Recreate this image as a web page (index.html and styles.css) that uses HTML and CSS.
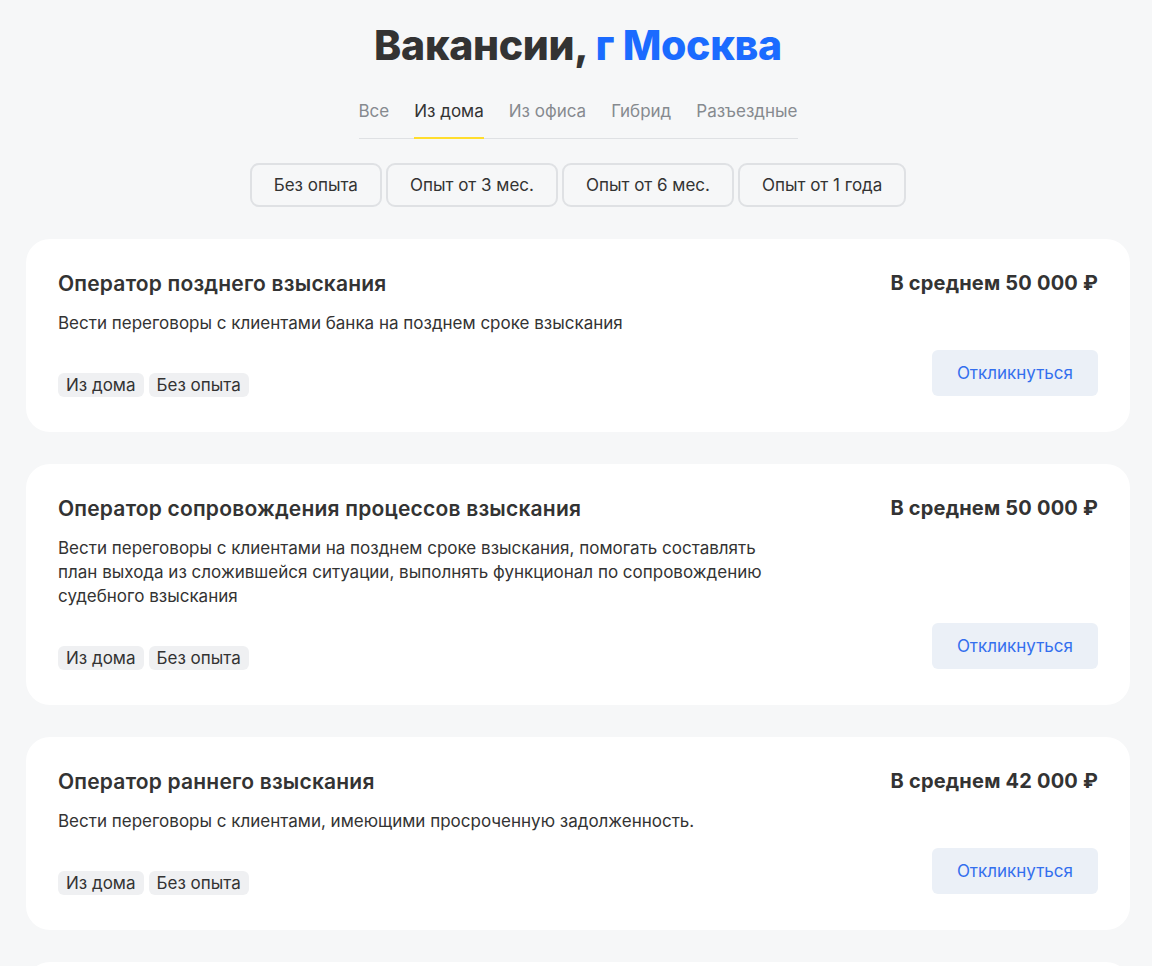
FILE: index.html
```html
<!DOCTYPE html>
<html lang="ru">
<head>
<meta charset="utf-8">
<title>Вакансии, г Москва</title>
<link rel="stylesheet" href="styles.css">
</head>
<body>
<main class="page">
  <h1 class="heading">Вакансии, <span class="city">г Москва</span></h1>
  <nav class="tabs">
    <a class="tab">Все</a>
    <a class="tab tab-active">Из дома</a>
    <a class="tab">Из офиса</a>
    <a class="tab">Гибрид</a>
    <a class="tab">Разъездные</a>
  </nav>
  <div class="chips">
    <button class="chip">Без опыта</button>
    <button class="chip">Опыт от 3 мес.</button>
    <button class="chip">Опыт от 6 мес.</button>
    <button class="chip">Опыт от 1 года</button>
  </div>
  <section class="list">
    <article class="card">
      <div class="card-main">
        <h2 class="card-title">Оператор позднего взыскания</h2>
        <p class="card-desc">Вести переговоры с клиентами банка на позднем сроке взыскания</p>
        <div class="tags"><span class="tag">Из дома</span><span class="tag">Без опыта</span></div>
      </div>
      <div class="card-side">
        <div class="salary">В среднем 50&nbsp;000 ₽</div>
        <button class="apply">Откликнуться</button>
      </div>
    </article>
    <article class="card">
      <div class="card-main">
        <h2 class="card-title">Оператор сопровождения процессов взыскания</h2>
        <p class="card-desc">Вести переговоры с клиентами на позднем сроке взыскания, помогать составлять план выхода из сложившейся ситуации, выполнять функционал по сопровождению судебного взыскания</p>
        <div class="tags"><span class="tag">Из дома</span><span class="tag">Без опыта</span></div>
      </div>
      <div class="card-side">
        <div class="salary">В среднем 50&nbsp;000 ₽</div>
        <button class="apply">Откликнуться</button>
      </div>
    </article>
    <article class="card">
      <div class="card-main">
        <h2 class="card-title">Оператор раннего взыскания</h2>
        <p class="card-desc">Вести переговоры с клиентами, имеющими просроченную задолженность.</p>
        <div class="tags"><span class="tag">Из дома</span><span class="tag">Без опыта</span></div>
      </div>
      <div class="card-side">
        <div class="salary">В среднем 42&nbsp;000 ₽</div>
        <button class="apply">Откликнуться</button>
      </div>
    </article>
    <article class="card">
      <div class="card-main">
        <h2 class="card-title">Оператор входящей линии</h2>
        <p class="card-desc">Консультировать клиентов банка по продуктам и услугам</p>
        <div class="tags"><span class="tag">Из дома</span><span class="tag">Без опыта</span></div>
      </div>
      <div class="card-side">
        <div class="salary">В среднем 45&nbsp;000 ₽</div>
        <button class="apply">Откликнуться</button>
      </div>
    </article>
  </section>
</main>
</body>
</html>
```

FILE: styles.css
```css
* { box-sizing: border-box; }

html, body {
  margin: 0;
  padding: 0;
  background: #f6f7f8;
  color: #333333;
  font-family: Inter, Roboto, "Liberation Sans", Arial, sans-serif;
}

.page {
  padding: 21px 22px 0 26px;
  display: flex;
  flex-direction: column;
  align-items: center;
}

.heading {
  margin: 0;
  font-weight: 800;
  font-size: 41px;
  line-height: 48px;
  letter-spacing: -0.3px;
  color: #333333;
}

.city { color: #1b6bff; }

.tabs {
  margin-top: 31px;
  display: flex;
  gap: 25px;
  border-bottom: 1px solid #dfe1e4;
}

.tab {
  font-size: 17px;
  line-height: 22px;
  padding-bottom: 15px;
  color: #868a8f;
  border-bottom: 2px solid transparent;
  margin-bottom: -1px;
  cursor: pointer;
}

.tab-active {
  color: #333333;
  border-bottom-color: #ffdd2d;
}

.chips {
  margin-top: 24px;
  display: flex;
  gap: 4px;
}

.chip {
  height: 44px;
  padding: 0 22px;
  border: 2px solid #dfe1e4;
  border-radius: 9px;
  background: #f6f7f8;
  color: #333333;
  font-family: inherit;
  font-size: 17px;
}

.list {
  margin-top: 32px;
  width: 100%;
  display: flex;
  flex-direction: column;
  gap: 32px;
}

.card {
  background: #ffffff;
  border-radius: 24px;
  padding: 32px 32px 35px 32px;
  display: flex;
  justify-content: space-between;
  gap: 24px;
}

.card-main {
  display: flex;
  flex-direction: column;
  max-width: 740px;
}

.card-title {
  margin: 0;
  font-size: 21px;
  line-height: 25px;
  font-weight: 600;
  letter-spacing: 0.2px;
  color: #333333;
}

.card-desc {
  margin: 15px 0 0 0;
  font-size: 17px;
  line-height: 24px;
}

.tags {
  margin-top: 38px;
  display: flex;
  gap: 5px;
}

.tag {
  background: #eff0f2;
  border-radius: 6px;
  padding: 0 8px;
  font-size: 17px;
  line-height: 24px;
}

.card-side {
  display: flex;
  flex-direction: column;
  align-items: flex-end;
  justify-content: space-between;
  flex-shrink: 0;
}

.salary {
  font-size: 20px;
  line-height: 25px;
  font-weight: 700;
  letter-spacing: 0.2px;
  color: #333333;
}

.apply {
  height: 46px;
  padding: 0 25px;
  border: none;
  border-radius: 6px;
  background: #ebf0f7;
  color: #336fee;
  font-family: inherit;
  font-size: 17px;
  margin-bottom: 1px;
}
```
